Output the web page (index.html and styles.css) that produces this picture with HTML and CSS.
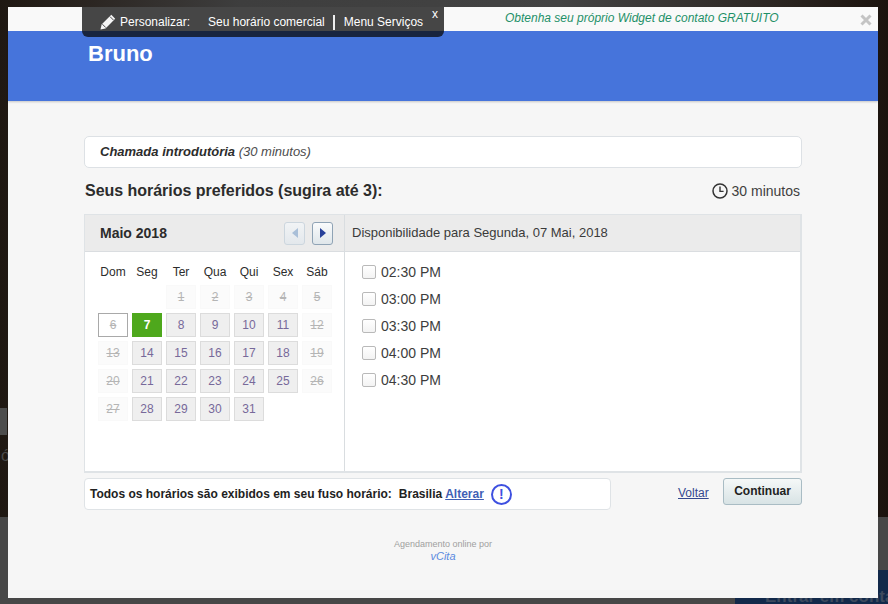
FILE: index.html
```html
<!DOCTYPE html>
<html lang="pt">
<head>
<meta charset="utf-8">
<title>Agendamento</title>
<link rel="stylesheet" href="styles.css">
</head>
<body>
<div class="backdrop">
  <div class="bd-main"></div>
  <div class="bd-block"></div>
  <div class="bd-letter">ó</div>
  <div class="bd-lower"></div>
  <div class="bd-cta">Entrar em contato</div>
</div>
<div class="modal">
  <div class="topstrip">
    <span class="promo">Obtenha seu próprio Widget de contato GRATUITO</span>
    <svg class="close" width="12" height="12" viewBox="0 0 12 12"><path d="M1.5 1.5l9 9M10.5 1.5l-9 9" stroke="#c4c4c4" stroke-width="3" fill="none"/></svg>
  </div>
  <header class="banner"><h1>Bruno</h1></header>
  <main class="content">
    <div class="intro"><b>Chamada introdutória</b> <span>(30 minutos)</span></div>
    <div class="titlerow">
      <h2>Seus horários preferidos (sugira até 3):</h2>
      <div class="duration">
        <svg width="16" height="16" viewBox="0 0 16 16"><circle cx="8" cy="8" r="7" fill="none" stroke="#333" stroke-width="1.5"/><path d="M8 3.6V8.4H11.6" fill="none" stroke="#333" stroke-width="1.4"/></svg>
        <span>30 minutos</span>
      </div>
    </div>
    <section class="scheduler">
      <div class="calendar">
        <div class="cal-head">
          <span class="month">Maio 2018</span>
          <div class="navs">
            <button class="nav off"><svg width="6" height="10" viewBox="0 0 6 10"><path d="M6 0v10L0 5z" fill="#a9bfd8"/></svg></button>
            <button class="nav"><svg width="6" height="10" viewBox="0 0 6 10"><path d="M0 0v10l6-5z" fill="#26409a"/></svg></button>
          </div>
        </div>
        <div class="weekdays"><span>Dom</span><span>Seg</span><span>Ter</span><span>Qua</span><span>Qui</span><span>Sex</span><span>Sáb</span></div>
        <div class="days">
          <span class="blank"></span><span class="blank"></span>
          <span class="d na">1</span><span class="d na">2</span><span class="d na">3</span><span class="d na">4</span><span class="d na">5</span>
          <span class="d na today">6</span><span class="d sel">7</span><span class="d av">8</span><span class="d av">9</span><span class="d av">10</span><span class="d av">11</span><span class="d na">12</span>
          <span class="d na">13</span><span class="d av">14</span><span class="d av">15</span><span class="d av">16</span><span class="d av">17</span><span class="d av">18</span><span class="d na">19</span>
          <span class="d na">20</span><span class="d av">21</span><span class="d av">22</span><span class="d av">23</span><span class="d av">24</span><span class="d av">25</span><span class="d na">26</span>
          <span class="d na">27</span><span class="d av">28</span><span class="d av">29</span><span class="d av">30</span><span class="d av">31</span>
        </div>
      </div>
      <div class="slots">
        <div class="slots-head">Disponibilidade para Segunda, 07 Mai, 2018</div>
        <ul class="slot-list">
          <li><i class="box"></i>02:30 PM</li>
          <li><i class="box"></i>03:00 PM</li>
          <li><i class="box"></i>03:30 PM</li>
          <li><i class="box"></i>04:00 PM</li>
          <li><i class="box"></i>04:30 PM</li>
        </ul>
      </div>
    </section>
    <div class="bottomrow">
      <div class="tz">
        <b>Todos os horários são exibidos em seu fuso horário:</b>
        <b class="city">Brasilia</b>
        <a class="change" href="#">Alterar</a>
        <span class="info">!</span>
      </div>
      <a class="back" href="#">Voltar</a>
      <button class="continue">Continuar</button>
    </div>
    <footer class="foot">
      <div>Agendamento online por</div>
      <a href="#">vCita</a>
    </footer>
  </main>
  <div class="toolbar">
    <svg class="pencil" width="16" height="16" viewBox="0 0 16 16"><path d="M0.5 15.5l1.1-5L11.3 0.8l3.9 3.9-9.7 9.7z" fill="#f6f6f6"/><path d="M10 2.6l3.4 3.4M2.4 10.2l3.4 3.4" stroke="#3b3b3b" stroke-width=".9" fill="none"/></svg>
    <span class="tb-label">Personalizar:</span>
    <span class="tb-link">Seu horário comercial</span>
    <span class="tb-link sep">Menu Serviços</span>
    <span class="tb-x">x</span>
  </div>
</div>
</body>
</html>
```
FILE: styles.css
```css
* { box-sizing: border-box; }
html, body { margin: 0; padding: 0; }
body {
  width: 888px;
  height: 604px;
  overflow: hidden;
  position: relative;
  font-family: "Liberation Sans", Arial, sans-serif;
  color: #2b2b2b;
  background: #474747;
}
.backdrop { position: absolute; inset: 0; overflow: hidden; }
.bd-main {
  position: absolute; left: 0; top: 0; width: 888px; height: 517px;
  background: linear-gradient(90deg, #1f1812 0, #2a2420 80px, #3e3e3e 240px, #434343 560px, #2a2420 790px, #1b130e 888px);
}
.bd-block { position: absolute; left: 0; top: 408px; width: 7px; height: 27px; background: #4d4d4d; }
.bd-letter { position: absolute; left: 1px; top: 447px; font-size: 16px; color: #4a4a4a; }
.bd-lower { position: absolute; left: 0; top: 517px; width: 888px; height: 87px; background: #474747; }
.bd-cta {
  position: absolute; left: 735px; top: 570px; width: 153px; height: 34px;
  background: #12294a; color: #3d4a5e; font-size: 17px; font-weight: bold;
  padding: 17px 0 0 30px; line-height: 20px; white-space: nowrap; overflow: hidden;
}
.modal {
  position: absolute; left: 8px; top: 7px; width: 870px; height: 591px;
  background: #f6f6f6;
  display: flex; flex-direction: column;
}
.topstrip {
  height: 24px; background: #f9f9f9; position: relative;
  display: flex; align-items: center;
  padding-left: 497px;
}
.promo { font-size: 12px; font-style: italic; color: #1e9068; position: relative; top: -1px; }
.close { position: absolute; left: 852px; top: 7px; }
.banner {
  height: 70px; background: #4674db; padding: 10px 0 0 80px;
  box-shadow: 0 1px 2px rgba(0, 0, 0, .2);
}
.banner h1 { margin: 0; font-size: 22px; line-height: 26px; font-weight: bold; color: #fff; }
.content { padding: 35px 76px 0; display: flex; flex-direction: column; }
.intro {
  height: 32px; background: #fff; border: 1px solid #dde1e5; border-radius: 5px;
  padding-left: 15px; line-height: 29px; font-size: 13px; font-style: italic; color: #2c2c2c;
}
.intro b { font-weight: bold; }
.intro span { color: #4c4c4c; }
.titlerow {
  height: 46px; display: flex; justify-content: space-between; align-items: center;
}
.titlerow h2 { margin: 0 0 0 1px; font-size: 16px; font-weight: bold; color: #2c2c2c; letter-spacing: -.03px; }
.duration { display: flex; align-items: center; gap: 4px; font-size: 14px; color: #3f3f3f; margin-right: 2px; }
.scheduler {
  height: 259px; display: flex; background: #fff;
  border: 2px solid #dfe3e6; border-width: 1px 2px 2px 1px;
}
.calendar { width: 260px; border-right: 1px solid #d9dde0; flex: none; }
.cal-head {
  height: 37px; background: #ebebeb; border-bottom: 1px solid #dadde0;
  display: flex; align-items: center; justify-content: space-between;
  padding: 0 11px 0 15px;
}
.month { font-size: 14px; font-weight: bold; color: #2c2c2c; }
.navs { display: flex; gap: 7px; }
.nav {
  width: 21px; height: 23px; padding: 0; display: flex; align-items: center; justify-content: center;
  border: 1px solid #8fa3b5; border-radius: 3px;
  background: linear-gradient(#fafbfc, #dfe6ea);
}
.nav.off { border-color: #ccd6de; background: linear-gradient(#f1f3f5, #e3e8ec); }
.weekdays {
  display: grid; grid-template-columns: repeat(7, 30px); column-gap: 4px;
  padding: 12px 0 0 13px; height: 32px; font-size: 12px; line-height: 16px; text-align: center; color: #2c2c2c;
}
.days {
  display: grid; grid-template-columns: repeat(7, 30px); grid-auto-rows: 24px; gap: 4px;
  padding: 1px 0 0 13px;
}
.d {
  display: flex; align-items: center; justify-content: center;
  font-size: 12px; border: 1px solid transparent;
}
.na { background: #fbfbfb; color: #b5b5b5; text-decoration: line-through; border-color: #f9f9f9; }
.av { background: #efefef; border-color: #dcdcdc; color: #77699a; }
.sel { background: #4ea81c; border-color: #4ea81c; color: #fff; font-weight: bold; }
.today { background: #fff; border-color: #a9a9a9; }
.slots { flex: 1; }
.slots-head {
  height: 37px; background: #ebebeb; border-bottom: 1px solid #dadde0;
  padding-left: 7px; font-size: 13px; line-height: 35px; color: #3a3a3a;
}
.slot-list { list-style: none; margin: 0; padding: 6px 0 0 17px; }
.slot-list li { height: 27px; display: flex; align-items: center; font-size: 14px; color: #3d3d3d; }
.box {
  width: 14px; height: 14px; margin-right: 5px; flex: none;
  border: 1px solid #b9b9b9; border-radius: 2px; background: linear-gradient(#fff, #f3f3f3);
}
.bottomrow { display: flex; align-items: flex-start; margin-top: 5px; position: relative; }
.tz {
  width: 527px; height: 32px; background: #fff; border: 1px solid #dfe3e6; border-radius: 4px;
  padding-left: 5px; display: flex; align-items: center; font-size: 12px; color: #222;
  flex: none;
}
.city { margin-left: 7px; }
.change { margin-left: 3px; color: #3f5fb5; font-weight: bold; }
.info {
  width: 21px; height: 21px; margin-left: 7px; border: 2px solid #3e50e0; border-radius: 50%;
  color: #3e50e0; font-size: 14px; font-weight: bold; display: flex; align-items: center; justify-content: center;
}
.back { margin: 8px 0 0 67px; font-size: 12px; color: #34488f; }
.continue {
  width: 79px; height: 27px; margin-left: auto; padding: 0 0 2px;
  border: 1px solid #a9bcc4; border-radius: 3px;
  background: linear-gradient(#f5f8f8, #d8e3e5);
  font: bold 12px "Liberation Sans", Arial, sans-serif; color: #222;
}
.foot { margin-top: 28px; text-align: center; font-size: 9px; line-height: 12px; color: #a0a0a0; }
.foot a { display: block; font-size: 11px; line-height: 12px; font-style: italic; color: #5a8ae0; text-decoration: none; }
.toolbar {
  position: absolute; left: 74px; top: 0; width: 362px; height: 30px;
  background: rgba(10, 10, 10, .75); border-radius: 0 0 6px 6px;
  display: flex; align-items: center; color: #fff; font-size: 12px;
  padding: 0 0 0 18px;
}
.pencil { flex: none; margin: 0 4px 0 0; }
.tb-label { margin-right: 18px; }
.tb-link.sep { margin-left: 8px; padding-left: 9px; border-left: 2px solid #eee; line-height: 15px; }
.tb-x { position: absolute; left: 350px; top: 0; font-size: 12px; line-height: 14px; }
```
